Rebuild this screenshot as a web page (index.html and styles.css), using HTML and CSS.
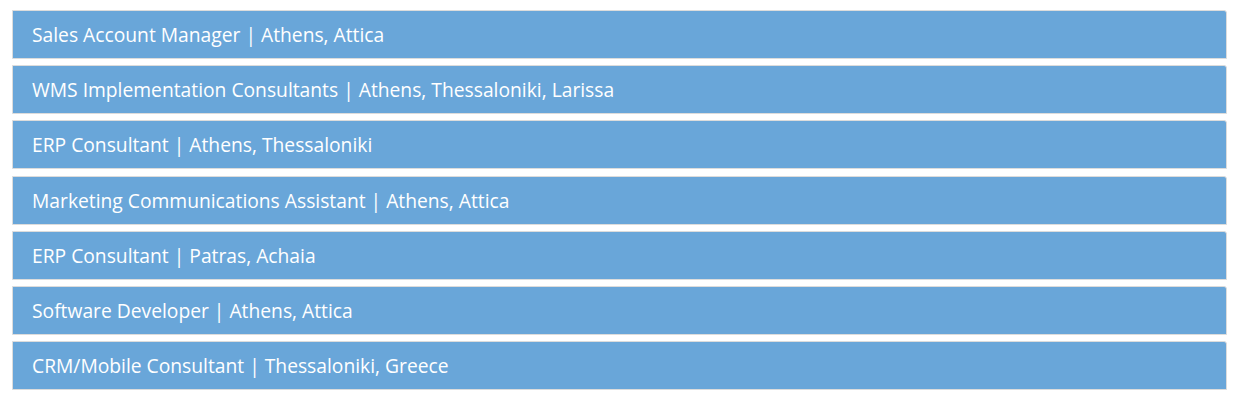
FILE: index.html
```html
<!DOCTYPE html>
<html lang="en">
<head>
    <meta charset="UTF-8">
    <title>Careers</title>
    <link rel="stylesheet" href="styles.css">
</head>
<body>
    <div class="job-list">
        <div class="job-panel"><a href="#">Sales Account Manager | Athens, Attica</a></div>
        <div class="job-panel"><a href="#">WMS Implementation Consultants | Athens, Thessaloniki, Larissa</a></div>
        <div class="job-panel"><a href="#">ERP Consultant | Athens, Thessaloniki</a></div>
        <div class="job-panel"><a href="#">Marketing Communications Assistant | Athens, Attica</a></div>
        <div class="job-panel"><a href="#">ERP Consultant | Patras, Achaia</a></div>
        <div class="job-panel"><a href="#">Software Developer | Athens, Attica</a></div>
        <div class="job-panel"><a href="#">CRM/Mobile Consultant | Thessaloniki, Greece</a></div>
    </div>
</body>
</html>
```

FILE: styles.css
```css
body {
    margin: 0;
    padding: 10px 9px 0 12px;
    background-color: #ffffff;
    font-family: 'Open Sans', sans-serif;
}

/* Job list */
.job-list {
    display: flex;
    flex-direction: column;
    gap: 6.2px;
}

.job-panel {
    height: 47px;
    display: flex;
    align-items: center;
    padding: 0 19px;
    background-color: #69a6d9;
    border: 1px solid #dcdcdc;
    border-radius: 0 3px 0 0;
}

.job-panel a {
    color: #ffffff;
    text-decoration: none;
    font-size: 19.25px;
}
```
